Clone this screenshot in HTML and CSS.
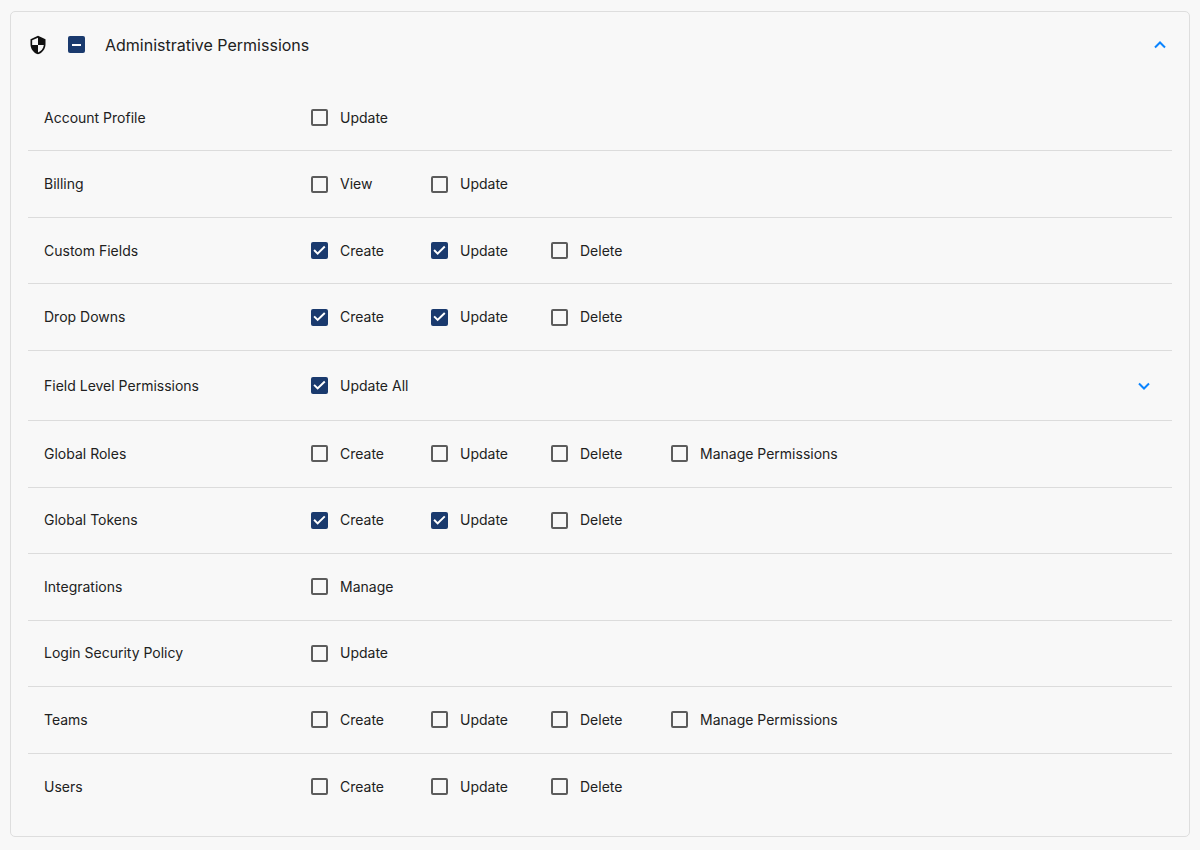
FILE: index.html
```html
<!DOCTYPE html>
<html lang="en">
<head>
<meta charset="utf-8">
<meta name="viewport" content="width=device-width, initial-scale=1">
<title>Administrative Permissions</title>
<link rel="stylesheet" href="styles.css">
</head>
<body>
<main class="card">
  <header class="card-header">
    <svg class="shield" viewBox="0 0 24 24" aria-hidden="true"><path d="M12 1 3 5v6c0 5.55 3.84 10.74 9 12 5.16-1.26 9-6.45 9-12V5l-9-4zm0 10.99h7c-.53 4.12-3.28 7.79-7 8.94V12H5V6.3l7-3.11v8.8z"/></svg>
    <input class="box mixed" type="checkbox" id="all" aria-checked="mixed">
    <label class="title" for="all">Administrative Permissions</label>
    <button class="toggle" type="button" aria-label="Collapse" aria-expanded="true"><svg class="chevron" viewBox="0 0 12 8" aria-hidden="true"><path d="M1 6.5 6 1.5l5 5"/></svg></button>
  </header>
  <ul class="rows">
    <li class="row"><span class="name">Account Profile</span>
      <label class="option"><input class="box" type="checkbox">Update</label></li>
    <li class="row"><span class="name">Billing</span>
      <label class="option"><input class="box" type="checkbox">View</label>
      <label class="option"><input class="box" type="checkbox">Update</label></li>
    <li class="row"><span class="name">Custom Fields</span>
      <label class="option"><input class="box" type="checkbox" checked>Create</label>
      <label class="option"><input class="box" type="checkbox" checked>Update</label>
      <label class="option"><input class="box" type="checkbox">Delete</label></li>
    <li class="row"><span class="name">Drop Downs</span>
      <label class="option"><input class="box" type="checkbox" checked>Create</label>
      <label class="option"><input class="box" type="checkbox" checked>Update</label>
      <label class="option"><input class="box" type="checkbox">Delete</label></li>
    <li class="row row-expandable"><span class="name">Field Level Permissions</span>
      <label class="option"><input class="box" type="checkbox" checked>Update All</label>
      <button class="toggle" type="button" aria-label="Expand" aria-expanded="false"><svg class="chevron" viewBox="0 0 12 8" aria-hidden="true"><path d="m1 1.5 5 5 5-5"/></svg></button></li>
    <li class="row"><span class="name">Global Roles</span>
      <label class="option"><input class="box" type="checkbox">Create</label>
      <label class="option"><input class="box" type="checkbox">Update</label>
      <label class="option"><input class="box" type="checkbox">Delete</label>
      <label class="option"><input class="box" type="checkbox">Manage Permissions</label></li>
    <li class="row"><span class="name">Global Tokens</span>
      <label class="option"><input class="box" type="checkbox" checked>Create</label>
      <label class="option"><input class="box" type="checkbox" checked>Update</label>
      <label class="option"><input class="box" type="checkbox">Delete</label></li>
    <li class="row"><span class="name">Integrations</span>
      <label class="option"><input class="box" type="checkbox">Manage</label></li>
    <li class="row"><span class="name">Login Security Policy</span>
      <label class="option"><input class="box" type="checkbox">Update</label></li>
    <li class="row"><span class="name">Teams</span>
      <label class="option"><input class="box" type="checkbox">Create</label>
      <label class="option"><input class="box" type="checkbox">Update</label>
      <label class="option"><input class="box" type="checkbox">Delete</label>
      <label class="option"><input class="box" type="checkbox">Manage Permissions</label></li>
    <li class="row"><span class="name">Users</span>
      <label class="option"><input class="box" type="checkbox">Create</label>
      <label class="option"><input class="box" type="checkbox">Update</label>
      <label class="option"><input class="box" type="checkbox">Delete</label></li>
  </ul>
</main>
</body>
</html>
```

FILE: styles.css
```css
* {
  box-sizing: border-box;
}

body {
  display: flex;
  flex-direction: column;
  min-height: 100vh;
  margin: 0;
  padding: 11px 10px 13px;
  background: #f8f8f8;
  color: #212121;
  font: 14px/20px Inter, "Liberation Sans", sans-serif;
}

.card {
  display: flex;
  flex: 1;
  flex-direction: column;
  padding: 0 17px 16px;
  border: 1px solid #dedede;
  border-radius: 5px;
}

.card-header {
  display: flex;
  align-items: center;
  height: 65px;
  margin-bottom: 8px;
}

.shield {
  width: 20px;
  height: 20px;
  margin-right: 20px;
  fill: #111;
}

.title {
  margin-left: 20px;
  font-size: 16px;
}

.rows {
  display: grid;
  flex: 1;
  margin: 0;
  padding: 0;
  list-style: none;
}

.row {
  display: flex;
  align-items: center;
  min-height: 64px;
  padding: 0 16px;
  border-bottom: 1px solid #dcdcdc;
}

.row:last-child {
  border-bottom: 0;
}

.row-expandable {
  min-height: 68px;
}

.name {
  flex: 0 0 267px;
}

.option {
  display: flex;
  flex: none;
  align-items: center;
  gap: 12px;
  min-width: 120px;
}

.box {
  display: grid;
  flex: none;
  width: 17px;
  height: 17px;
  margin: 0;
  border: 2px solid #5c5c5c;
  border-radius: 2px;
  appearance: none;
}

.box:checked,
.box.mixed {
  border: 0;
  background: #1a3a6e;
}

.box:checked::after {
  background: #fff;
  clip-path: polygon(39% 75%, 14% 50%, 22% 42%, 39% 59%, 77% 22%, 85% 30%);
  content: "";
}

.box.mixed::after {
  place-self: center;
  width: 9px;
  height: 2px;
  background: #fff;
  content: "";
}

.toggle {
  display: grid;
  place-items: center;
  width: 24px;
  height: 24px;
  margin-left: auto;
  padding: 0;
  border: 0;
  background: none;
}

.chevron {
  width: 12px;
  height: 8px;
  fill: none;
  stroke: #0a84ff;
  stroke-width: 2;
}
```
